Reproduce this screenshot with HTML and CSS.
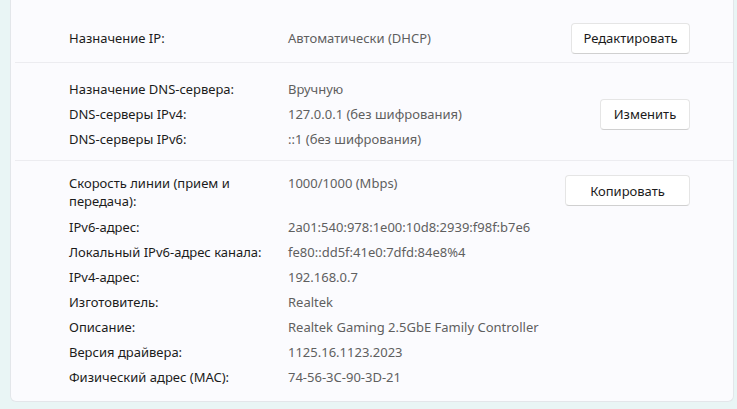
FILE: index.html
```html
<!DOCTYPE html>
<html lang="ru">
<head>
<meta charset="utf-8">
<link rel="stylesheet" href="styles.css">
</head>
<body>
<div class="card">
  <section class="group group-ip">
    <dl class="props">
      <dt>Назначение IP:</dt><dd>Автоматически (DHCP)</dd>
    </dl>
    <button class="btn btn-edit">Редактировать</button>
  </section>
  <section class="group group-dns">
    <dl class="props">
      <dt>Назначение DNS-сервера:</dt><dd>Вручную</dd>
      <dt>DNS-серверы IPv4:</dt><dd>127.0.0.1 (без шифрования)</dd>
      <dt>DNS-серверы IPv6:</dt><dd>::1 (без шифрования)</dd>
    </dl>
    <button class="btn btn-change">Изменить</button>
  </section>
  <section class="group group-info">
    <dl class="props">
      <dt class="wrap">Скорость линии (прием и передача):</dt><dd>1000/1000 (Mbps)</dd>
      <dt>IPv6-адрес:</dt><dd>2a01:540:978:1e00:10d8:2939:f98f:b7e6</dd>
      <dt>Локальный IPv6-адрес канала:</dt><dd>fe80::dd5f:41e0:7dfd:84e8%4</dd>
      <dt>IPv4-адрес:</dt><dd>192.168.0.7</dd>
      <dt>Изготовитель:</dt><dd>Realtek</dd>
      <dt>Описание:</dt><dd>Realtek Gaming 2.5GbE Family Controller</dd>
      <dt>Версия драйвера:</dt><dd>1125.16.1123.2023</dd>
      <dt>Физический адрес (MAC):</dt><dd>74-56-3C-90-3D-21</dd>
    </dl>
    <button class="btn btn-copy">Копировать</button>
  </section>
</div>
</body>
</html>
```

FILE: styles.css
```css
html, body {
  margin: 0;
  padding: 0;
}
body {
  background: #e9f5f5;
  font-family: "Noto Sans", "Segoe UI", sans-serif;
  font-size: 13px;
  color: #1b1b1b;
  width: 737px;
  height: 409px;
  overflow: hidden;
}
.card {
  margin: 0 3px 0 10px;
  background: #fbfbfe;
  border: 1px solid #e3e6ea;
  border-top: none;
  border-radius: 0 0 6px 6px;
  height: 402px;
  box-sizing: border-box;
  display: flex;
  flex-direction: column;
}
.group {
  display: flex;
  align-items: center;
  margin: 0 0 0 4px;
  padding: 0 43px 0 54px;
  border-bottom: 1px solid #ececf0;
}
.group:last-child {
  border-bottom: none;
}
.group-ip {
  height: 63px;
  padding-top: 14px;
  box-sizing: border-box;
}
.group-dns {
  padding-top: 17px;
  padding-bottom: 12px;
}
.group-info {
  align-items: flex-start;
  padding-top: 13px;
}
.props {
  flex: 1;
  margin: 0;
  display: grid;
  grid-template-columns: 212px 1fr;
  column-gap: 7px;
  row-gap: 7px;
  line-height: 18px;
}
.props dt {
  margin: 0;
  color: #1b1b1b;
}
.props dt.wrap {
  padding-bottom: 1px;
}
.props dd {
  margin: 0;
  color: #5f5f5f;
}
.btn {
  font-family: inherit;
  font-size: 13px;
  color: #1b1b1b;
  background: #ffffff;
  border: 1px solid #e5e5e5;
  border-bottom-color: #d0d0d0;
  border-radius: 4px;
  height: 31px;
  padding: 0;
  flex: none;
}
.btn-edit { width: 119px; }
.btn-change { width: 90px; }
.btn-copy { width: 125px; margin-top: 1px; }
```
